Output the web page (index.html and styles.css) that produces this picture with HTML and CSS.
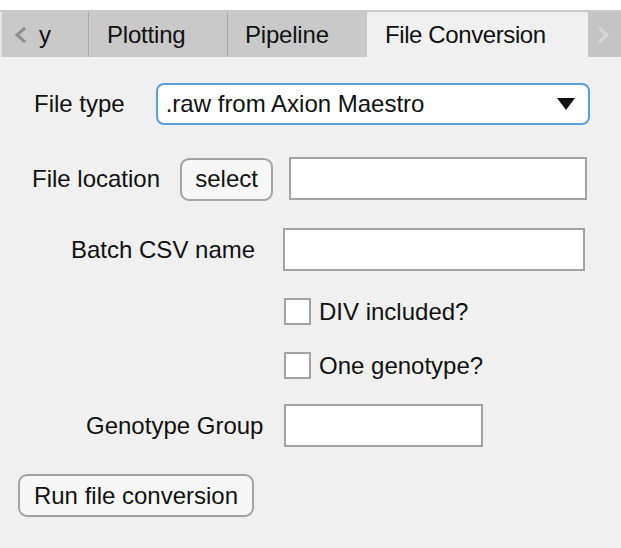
FILE: index.html
```html
<!DOCTYPE html>
<html>
<head>
<meta charset="utf-8">
<link rel="stylesheet" href="styles.css">
</head>
<body>
<div class="tabbar">
  <div class="tab tab-first">
    <svg class="chev" width="14" height="18" viewBox="0 0 14 18"><polyline points="11,2 3,9 11,16" fill="none" stroke="#8e8e8e" stroke-width="3"/></svg>
    <span class="clip">y</span>
  </div>
  <div class="tab tab-plot">Plotting</div>
  <div class="tab tab-pipe">Pipeline</div>
  <div class="tab tab-active">File Conversion</div>
  <div class="tab tab-next">
    <svg width="12" height="18" viewBox="0 0 12 18"><polyline points="2,2 10,9 2,16" fill="none" stroke="#d6d6d6" stroke-width="3"/></svg>
  </div>
</div>
<div class="panel">
  <div class="row row-type">
    <span class="label">File type</span>
    <div class="dropdown">
      <span>.raw from Axion Maestro</span>
      <svg width="18" height="12" viewBox="0 0 18 12"><polygon points="0,0 18,0 9,12" fill="#111"/></svg>
    </div>
  </div>
  <div class="row row-loc">
    <span class="label">File location</span>
    <button class="btn btn-select">select</button>
    <div class="field field-loc"></div>
  </div>
  <div class="row row-batch">
    <span class="label label-batch">Batch CSV name</span>
    <div class="field field-batch"></div>
  </div>
  <div class="row row-check row-div">
    <span class="box"></span><span class="label">DIV included?</span>
  </div>
  <div class="row row-check row-one">
    <span class="box"></span><span class="label">One genotype?</span>
  </div>
  <div class="row row-geno">
    <span class="label label-geno">Genotype Group</span>
    <div class="field field-geno"></div>
  </div>
  <div class="row row-run">
    <button class="btn btn-run">Run file conversion</button>
  </div>
</div>
</body>
</html>
```

FILE: styles.css
```css
html, body {
  margin: 0;
  padding: 0;
  background: #ffffff;
  font-family: "Liberation Sans", Arial, sans-serif;
  font-size: 24px;
  color: #111;
}
.tabbar {
  margin-top: 10px;
  height: 47px;
  background: #c9c9c9;
  display: flex;
  align-items: flex-end;
}
.tab {
  height: 45px;
  box-sizing: border-box;
  display: flex;
  align-items: center;
  border-right: 1px solid #a9a9a9;
  white-space: nowrap;
  letter-spacing: -0.2px;
}
.tab-first {
  width: 89px;
  padding-left: 12px;
  border-left: 2px solid #e4e4e4;
  gap: 11px;
}
.tab-first .clip {
  display: inline-block;
}
.tab-plot {
  width: 139px;
  padding-left: 18px;
}
.tab-pipe {
  width: 139px;
  padding-left: 17px;
  border-right: none;
}
.tab-active {
  width: 221px;
  padding-left: 18px;
  background: #f0f0f0;
  border-right: none;
  letter-spacing: -0.4px;
  border-radius: 2px 2px 0 0;
}
.tab-next {
  flex: 1;
  justify-content: center;
  padding-right: 4px;
  background: #c5c5c5;
  border-right: none;
  border-bottom-left-radius: 4px;
}
.panel {
  background: #f0f0f0;
  height: 491px;
  padding-top: 1px;
  box-sizing: border-box;
}
.row {
  display: flex;
  align-items: center;
}
.label {
  white-space: nowrap;
}
.row-type {
  margin-top: 25px;
  padding-left: 34px;
  gap: 31px;
}
.dropdown {
  width: 434px;
  height: 42px;
  box-sizing: border-box;
  border: 2px solid #5b9de6;
  border-radius: 8px;
  background: #fff;
  display: flex;
  align-items: center;
  justify-content: space-between;
  padding: 0 13px 0 8px;
}
.row-loc {
  margin-top: 32px;
  padding-left: 32px;
  height: 44px;
}
.btn {
  font-family: inherit;
  font-size: 24px;
  color: #111;
  background: #f7f7f7;
  border: 2px solid #a3a3a3;
  border-radius: 9px;
  height: 43px;
  box-sizing: border-box;
  padding: 0;
}
.btn-select {
  width: 93px;
  margin-left: 20px;
}
.field {
  background: #fff;
  border: 2px solid #a3a3a3;
  box-sizing: border-box;
  height: 43px;
}
.field-loc {
  width: 298px;
  height: 43px;
  margin-left: 16px;
  align-self: flex-start;
}
.row-batch {
  margin-top: 27px;
  padding-left: 71px;
  gap: 28px;
}
.field-batch {
  width: 302px;
}
.row-check {
  padding-left: 284px;
  gap: 8px;
  height: 27px;
  line-height: 27px;
}
.box {
  width: 27px;
  height: 27px;
  box-sizing: border-box;
  border: 2px solid #a3a3a3;
  background: #fff;
}
.row-div {
  margin-top: 27px;
}
.row-one {
  margin-top: 27px;
}
.row-geno {
  margin-top: 25px;
  padding-left: 86px;
  gap: 21px;
}
.field-geno {
  width: 199px;
}
.row-run {
  margin-top: 27px;
  padding-left: 18px;
}
.btn-run {
  width: 236px;
}
```
